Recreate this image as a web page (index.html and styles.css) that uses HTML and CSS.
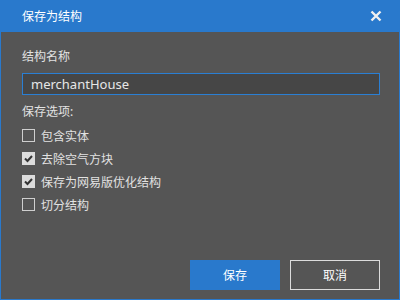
FILE: index.html
```html
<!DOCTYPE html>
<html lang="zh-CN">
<head>
  <meta charset="UTF-8">
  <title>保存为结构</title>
  <link rel="stylesheet" href="styles.css">
</head>
<body>
  <div class="dialog">
    <div class="titlebar">
      <span class="title">保存为结构</span>
      <svg class="close" width="12" height="12" viewBox="0 0 12 12">
        <path d="M1.5 1.5 L10.5 10.5 M10.5 1.5 L1.5 10.5" stroke="#f0f0f0" stroke-width="2.4" fill="none"/>
      </svg>
    </div>
    <div class="content">
      <div class="label">结构名称</div>
      <input type="text" class="name-input" value="merchantHouse">
      <div class="label options-label">保存选项:</div>
      <div class="options">
        <div class="option"><span class="box"></span>包含实体</div>
        <div class="option"><span class="box checked"><svg width="13" height="13" viewBox="0 0 13 13"><path d="M3 6.5 L5.5 9 L10 4" stroke="#333" stroke-width="2" fill="none"/></svg></span>去除空气方块</div>
        <div class="option"><span class="box checked"><svg width="13" height="13" viewBox="0 0 13 13"><path d="M3 6.5 L5.5 9 L10 4" stroke="#333" stroke-width="2" fill="none"/></svg></span>保存为网易版优化结构</div>
        <div class="option"><span class="box"></span>切分结构</div>
      </div>
      <div class="buttons">
        <button class="btn btn-save">保存</button>
        <button class="btn btn-cancel">取消</button>
      </div>
    </div>
  </div>
</body>
</html>
```

FILE: styles.css
```css
body {
  margin: 0;
  font-family: "Noto Sans", "Noto Sans CJK SC", sans-serif;
  font-size: 12px;
}

.dialog {
  width: 400px;
  height: 300px;
  box-sizing: border-box;
  background-color: #2979cc;
  padding: 0 1px 1px 1px;
  display: flex;
  flex-direction: column;
}

.titlebar {
  height: 32px;
  display: flex;
  align-items: center;
  justify-content: space-between;
  padding: 0 17px 0 21px;
  color: #fff;
}

.title {
  font-size: 12px;
}

.content {
  flex: 1;
  background-color: #555;
  color: #e2e2e2;
  padding: 16px 19px 9px 21px;
  display: flex;
  flex-direction: column;
}

.label {
  line-height: 17px;
}

.name-input {
  margin-top: 8px;
  height: 22px;
  box-sizing: border-box;
  width: 100%;
  background-color: #464646;
  border: 1px solid #2a7fd4;
  color: #e6e6e6;
  font-family: "Noto Sans", sans-serif;
  font-size: 13px;
  padding: 0 0 0 8px;
  outline: none;
}

.options-label {
  margin-top: 8px;
}

.options {
  margin-top: 4px;
  display: flex;
  flex-direction: column;
}

.option {
  height: 23px;
  display: flex;
  align-items: center;
  gap: 6px;
}

.box {
  width: 13px;
  height: 13px;
  box-sizing: border-box;
  border: 1px solid #cfcfcf;
  display: flex;
}

.box.checked {
  background-color: #dcdcdc;
  border-color: #dcdcdc;
}

.box svg {
  margin: -1px;
}

.buttons {
  margin-top: auto;
  display: flex;
  justify-content: flex-end;
  gap: 10px;
}

.btn {
  width: 90px;
  height: 30px;
  font-family: "Noto Sans", "Noto Sans CJK SC", sans-serif;
  font-size: 12px;
  color: #fff;
  cursor: pointer;
}

.btn-save {
  background-color: #2979cc;
  border: none;
}

.btn-cancel {
  background-color: transparent;
  border: 1px solid #dcdcdc;
}
```
